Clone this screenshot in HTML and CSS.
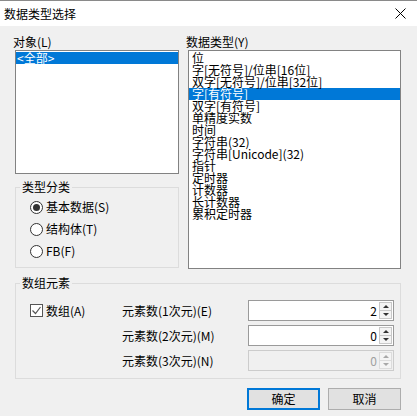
FILE: index.html
```html
<!DOCTYPE html>
<html lang="zh">
<head>
    <meta charset="UTF-8">
    <title>数据类型选择</title>
    <link rel="stylesheet" href="styles.css">
</head>
<body>
    <div class="dialog">
        <div class="titlebar">
            <span class="title">数据类型选择</span>
            <svg class="close" width="11" height="11" viewBox="0 0 11 11">
                <path d="M0.5 0.5 L10.5 10.5 M10.5 0.5 L0.5 10.5" stroke="#000" stroke-width="1" fill="none"/>
            </svg>
        </div>

        <div class="content">
            <div class="top">
                <div class="col">
                    <div class="caption">对象(L)</div>
                    <ul class="listbox listbox-objects">
                        <li class="selected">&lt;全部&gt;</li>
                    </ul>

                    <fieldset class="group group-kind">
                        <legend>类型分类</legend>
                        <label class="option"><span class="radio checked"></span>基本数据(S)</label>
                        <label class="option"><span class="radio"></span>结构体(T)</label>
                        <label class="option"><span class="radio"></span>FB(F)</label>
                    </fieldset>
                </div>

                <div class="col">
                    <div class="caption">数据类型(Y)</div>
                    <ul class="listbox listbox-types">
                        <li>位</li>
                        <li>字[无符号]/位串[16位]</li>
                        <li>双字[无符号]/位串[32位]</li>
                        <li class="selected">字[有符号]</li>
                        <li>双字[有符号]</li>
                        <li>单精度实数</li>
                        <li>时间</li>
                        <li>字符串(32)</li>
                        <li>字符串[Unicode](32)</li>
                        <li>指针</li>
                        <li>定时器</li>
                        <li>计数器</li>
                        <li>长计数器</li>
                        <li>累积定时器</li>
                    </ul>
                </div>
            </div>

            <fieldset class="group group-array">
                <legend>数组元素</legend>
                <div class="array-grid">
                    <label class="option">
                        <span class="checkbox">
                            <svg width="11" height="11" viewBox="0 0 11 11">
                                <path d="M1.5 5.5 L4.5 8.5 L9.5 2" stroke="#555" stroke-width="1.2" fill="none"/>
                            </svg>
                        </span>数组(A)
                    </label>
                    <span class="field-label">元素数(1次元)(E)</span>
                    <div class="spin">
                        <span class="spin-value">2</span>
                        <span class="spin-buttons"><span class="arrow up"></span><span class="arrow down"></span></span>
                    </div>

                    <span></span>
                    <span class="field-label">元素数(2次元)(M)</span>
                    <div class="spin">
                        <span class="spin-value">0</span>
                        <span class="spin-buttons"><span class="arrow up"></span><span class="arrow down"></span></span>
                    </div>

                    <span></span>
                    <span class="field-label">元素数(3次元)(N)</span>
                    <div class="spin disabled">
                        <span class="spin-value">0</span>
                        <span class="spin-buttons"><span class="arrow up"></span><span class="arrow down"></span></span>
                    </div>
                </div>
            </fieldset>

            <div class="buttons">
                <button class="btn btn-default">确定</button>
                <button class="btn">取消</button>
            </div>
        </div>
    </div>
</body>
</html>
```

FILE: styles.css
```css
body {
    margin: 0;
    font-family: "Noto Sans CJK SC", "Liberation Sans", sans-serif;
    font-size: 12px;
    color: #000;
}

.dialog {
    width: 417px;
    height: 416px;
    background-color: #f0f0f0;
    border-top: 1px solid #8a8a8a;
    box-sizing: border-box;
}

.titlebar {
    height: 25px;
    background-color: #fff;
    display: flex;
    align-items: center;
    justify-content: space-between;
    padding: 0 11px 0 4px;
}

.title {
    line-height: 12px;
}

.content {
    padding: 10px 16px 0 15px;
}

.top {
    display: grid;
    grid-template-columns: 164px 213px;
    column-gap: 9px;
}

.col {
    display: flex;
    flex-direction: column;
}

.caption {
    line-height: 12px;
    height: 12px;
    margin: 0 0 2px -2px;
}

.listbox {
    list-style: none;
    margin: 0;
    padding: 1px 0 0 0;
    background-color: #fff;
    border: 1px solid #828282;
    box-sizing: border-box;
}

.listbox li {
    line-height: 12px;
    height: 12px;
    padding: 0 3px;
    white-space: nowrap;
}

.listbox li.selected {
    background-color: #0078d7;
    color: #fff;
}

.listbox-objects {
    height: 124px;
}

.listbox-objects li {
    padding-left: 1px;
}

.listbox-types {
    height: 219px;
}

.group {
    margin: 0;
    min-width: 0;
    border: 1px solid #dcdcdc;
}

.group legend {
    padding: 0 2px;
    line-height: 12px;
    margin-left: -10px;
}

.group-kind {
    margin-top: 7px;
    padding: 6px 8px 8px 14px;
    display: flex;
    flex-direction: column;
    gap: 6px;
}

.option {
    display: flex;
    align-items: center;
    gap: 3px;
    height: 16px;
    line-height: 12px;
}

.radio {
    width: 13px;
    height: 13px;
    border: 1px solid #333;
    border-radius: 50%;
    box-sizing: border-box;
    background-color: #fff;
    display: flex;
    align-items: center;
    justify-content: center;
}

.radio.checked::after {
    content: "";
    width: 7px;
    height: 7px;
    border-radius: 50%;
    background-color: #333;
}

.checkbox {
    width: 13px;
    height: 13px;
    border: 1px solid #555;
    box-sizing: border-box;
    background-color: #fff;
    display: flex;
    align-items: center;
    justify-content: center;
}

.group-array {
    margin-top: 8px;
    padding: 11px 6px 7px 14px;
}

.array-grid {
    display: grid;
    grid-template-columns: 92px 126px 146px;
    grid-auto-rows: 21px;
    row-gap: 4px;
    align-items: center;
}

.field-label {
    line-height: 12px;
}

.spin {
    height: 21px;
    border: 1px solid #9a9a9a;
    background-color: #fff;
    box-sizing: border-box;
    display: flex;
    align-items: center;
    justify-content: flex-end;
    padding-right: 1px;
}

.spin-value {
    line-height: 12px;
    margin-right: 2px;
}

.spin-buttons {
    width: 13px;
    height: 17px;
    box-sizing: border-box;
    border: 1px solid #c8c8c8;
    background-color: #f4f4f4;
    display: flex;
    flex-direction: column;
}

.arrow {
    flex: 1;
    display: flex;
    align-items: center;
    justify-content: center;
}

.arrow.up {
    border-bottom: 1px solid #c8c8c8;
}

.arrow.up::after {
    content: "";
    border-left: 3px solid transparent;
    border-right: 3px solid transparent;
    border-bottom: 3px solid #333;
}

.arrow.down::after {
    content: "";
    border-left: 3px solid transparent;
    border-right: 3px solid transparent;
    border-top: 3px solid #333;
}

.spin.disabled {
    background-color: #f0f0f0;
    border-color: #cccccc;
    color: #a0a0a0;
}

.spin.disabled .spin-buttons {
    border-color: #dcdcdc;
}

.spin.disabled .arrow.up {
    border-bottom-color: #dcdcdc;
}

.spin.disabled .arrow.up::after {
    border-bottom-color: #a8a8a8;
}

.spin.disabled .arrow.down::after {
    border-top-color: #a8a8a8;
}

.buttons {
    display: flex;
    justify-content: flex-end;
    gap: 8px;
    margin-top: 9px;
}

.btn {
    width: 73px;
    height: 22px;
    font-family: inherit;
    font-size: 12px;
    line-height: 12px;
    padding: 0;
    background-color: #e1e1e1;
    border: 1px solid #adadad;
    color: #000;
}

.btn-default {
    border: 2px solid #0078d7;
}
```
